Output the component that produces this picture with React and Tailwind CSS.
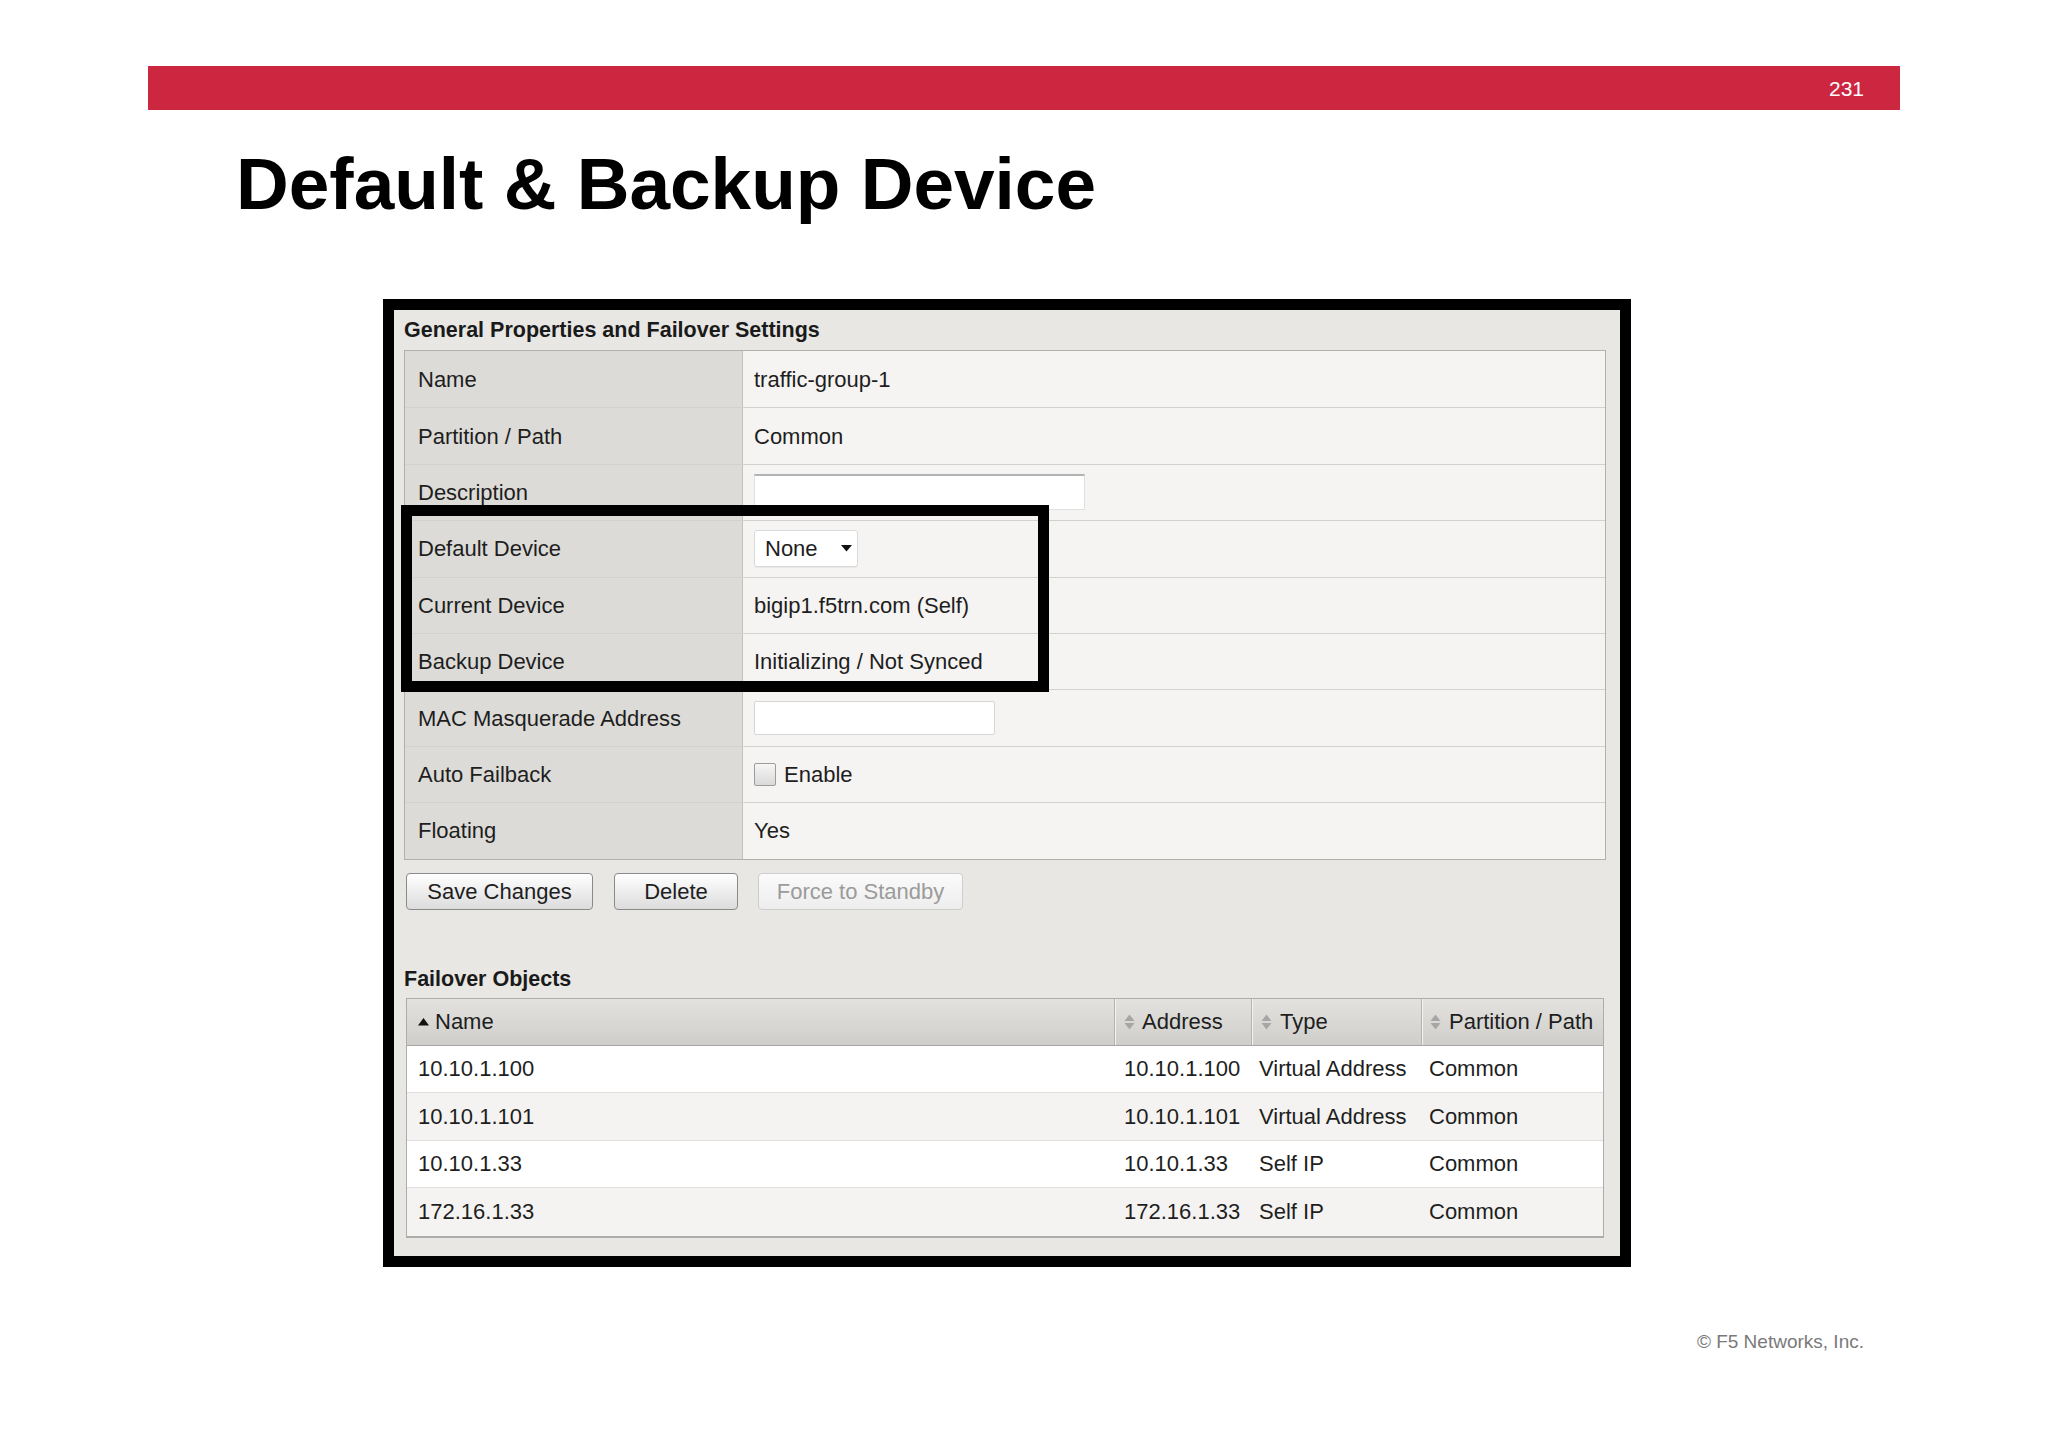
import React from "react";

const SortBoth = () => (
  <svg width="11" height="18" viewBox="0 0 11 18" className="shrink-0">
    <polygon points="0.5,8 5.5,1.5 10.5,8" fill="#a6a6a6" />
    <polygon points="0.5,10 5.5,16.5 10.5,10" fill="#a6a6a6" />
  </svg>
);

const SortUp = () => (
  <svg width="11" height="9" viewBox="0 0 11 9" className="shrink-0">
    <polygon points="0,8.5 5.5,1 11,8.5" fill="#111" />
  </svg>
);

const Caret = () => (
  <svg width="11" height="7" viewBox="0 0 11 7" className="shrink-0 ml-[23px]">
    <polygon points="0,0 11,0 5.5,6.5" fill="#111" />
  </svg>
);

const formRows = [
  ["Name", "traffic-group-1"],
  ["Partition / Path", "Common"],
  [
    "Description",
    <div className="w-[331px] h-[36px] bg-white border border-[#e0e0e0] border-t-[2px] border-t-[#b3b3b3]" />,
  ],
  [
    "Default Device",
    <div className="w-[104px] h-[37px] bg-white border border-[#dadada] rounded-[3px] flex items-center pl-[10px] shadow-[0_1px_1px_rgba(0,0,0,0.06)]">
      <span>None</span>
      <Caret />
    </div>,
  ],
  ["Current Device", "bigip1.f5trn.com (Self)"],
  ["Backup Device", "Initializing / Not Synced"],
  [
    "MAC Masquerade Address",
    <div className="w-[241px] h-[34px] bg-white border border-[#d6d6d6] rounded-[2px]" />,
  ],
  [
    "Auto Failback",
    <div className="flex items-center">
      <div className="w-[22px] h-[23px] border border-[#9c9c9c] rounded-[2px] bg-gradient-to-b from-[#f6f6f6] to-[#d9d9d9]" />
      <span className="ml-[8px]">Enable</span>
    </div>,
  ],
  ["Floating", "Yes"],
];

const tableRows = [
  ["10.10.1.100", "10.10.1.100", "Virtual Address", "Common"],
  ["10.10.1.101", "10.10.1.101", "Virtual Address", "Common"],
  ["10.10.1.33", "10.10.1.33", "Self IP", "Common"],
  ["172.16.1.33", "172.16.1.33", "Self IP", "Common"],
];

export default function App() {
  return (
    <div className="w-[2048px] h-[1447px] bg-white flex flex-col overflow-hidden font-['Liberation_Sans',Arial,sans-serif]">
      {/* red bar */}
      <div className="mt-[66px] ml-[148px] w-[1752px] h-[44px] bg-[#cc2641] flex items-center justify-end pr-[36px] text-white text-[21px] leading-none">
        231
      </div>

      {/* title */}
      <h1 className="mt-[37px] ml-[236px] text-[73px] leading-[73px] font-bold text-black">
        Default &amp; Backup Device
      </h1>

      {/* framed screenshot */}
      <div className="mt-[79px] ml-[383px] w-[1248px] h-[968px] border-[11px] border-black bg-[#e8e7e4] flex flex-col text-[#1e1e1e] text-[22px]">
        <div className="mt-[8px] ml-[10px] text-[21.5px] leading-[24px] font-bold text-[#1a1a1a]">
          General Properties and Failover Settings
        </div>

        <div className="relative mt-[8px] ml-[10px] w-[1202px]">
          <div className="border border-[#b0b0b0] flex flex-col">
            {formRows.map(([label, value], i) => (
              <div
                key={label}
                className={
                  "flex h-[56.4px] " +
                  (i === 0 ? "" : "border-t border-[#d2d1ce]")
                }
              >
                <div className="w-[338px] shrink-0 bg-[#dcdbd8] border-r border-[#c3c2bf] pl-[13px] flex items-center">
                  {label}
                </div>
                <div className="flex-1 bg-[#f5f4f2] pl-[11px] flex items-center">
                  {value}
                </div>
              </div>
            ))}
          </div>
          {/* highlight box */}
          <div className="absolute left-[-3px] top-[155px] w-[648px] h-[187px] border-[11px] border-black pointer-events-none" />
        </div>

        {/* buttons */}
        <div className="mt-[13px] ml-[12px] flex">
          <div className="w-[187px] h-[37px] border border-[#8a8a8a] rounded-[4px] bg-gradient-to-b from-[#ffffff] to-[#dcdcdc] flex items-center justify-center">
            Save Changes
          </div>
          <div className="ml-[21px] w-[124px] h-[37px] border border-[#8a8a8a] rounded-[4px] bg-gradient-to-b from-[#ffffff] to-[#dcdcdc] flex items-center justify-center">
            Delete
          </div>
          <div className="ml-[20px] w-[205px] h-[37px] border border-[#cdcdcd] rounded-[4px] bg-gradient-to-b from-[#fbfbfb] to-[#ededed] text-[#9b9b9b] flex items-center justify-center">
            Force to Standby
          </div>
        </div>

        <div className="mt-[57px] ml-[10px] text-[21.5px] leading-[24px] font-bold text-[#1a1a1a]">
          Failover Objects
        </div>

        {/* failover table */}
        <div className="mt-[7px] ml-[12px] w-[1198px] border border-[#adadad] border-b-2 flex flex-col">
          <div className="flex h-[47px] bg-gradient-to-b from-[#e3e2df] to-[#cfcecb] border-b border-[#a6a6a6]">
            <div className="w-[707px] shrink-0 pl-[11px] flex items-center gap-[6px]">
              <SortUp />
              <span>Name</span>
            </div>
            <div className="w-[137px] shrink-0 border-l border-[#b3b3b3] shadow-[inset_1px_0_0_#f3f3f3] pl-[9px] flex items-center gap-[7px]">
              <SortBoth />
              <span>Address</span>
            </div>
            <div className="w-[170px] shrink-0 border-l border-[#b3b3b3] shadow-[inset_1px_0_0_#f3f3f3] pl-[9px] flex items-center gap-[8px]">
              <SortBoth />
              <span>Type</span>
            </div>
            <div className="flex-1 border-l border-[#b3b3b3] shadow-[inset_1px_0_0_#f3f3f3] pl-[8px] flex items-center gap-[8px]">
              <SortBoth />
              <span>Partition / Path</span>
            </div>
          </div>
          {tableRows.map((r, i) => (
            <div
              key={i}
              className={
                "flex h-[47.5px] items-center " +
                (i % 2 === 0 ? "bg-white " : "bg-[#f4f3f1] ") +
                (i < tableRows.length - 1 ? "border-b border-[#e0dfdc]" : "")
              }
            >
              <div className="w-[707px] shrink-0 pl-[11px]">{r[0]}</div>
              <div className="w-[137px] shrink-0 pl-[10px]">{r[1]}</div>
              <div className="w-[170px] shrink-0 pl-[8px]">{r[2]}</div>
              <div className="flex-1 pl-[8px]">{r[3]}</div>
            </div>
          ))}
        </div>
      </div>

      {/* footer */}
      <div className="mt-[64px] flex justify-end pr-[184px] text-[19px] leading-[22px] text-[#7a7a7a]">
        © F5 Networks, Inc.
      </div>
    </div>
  );
}
